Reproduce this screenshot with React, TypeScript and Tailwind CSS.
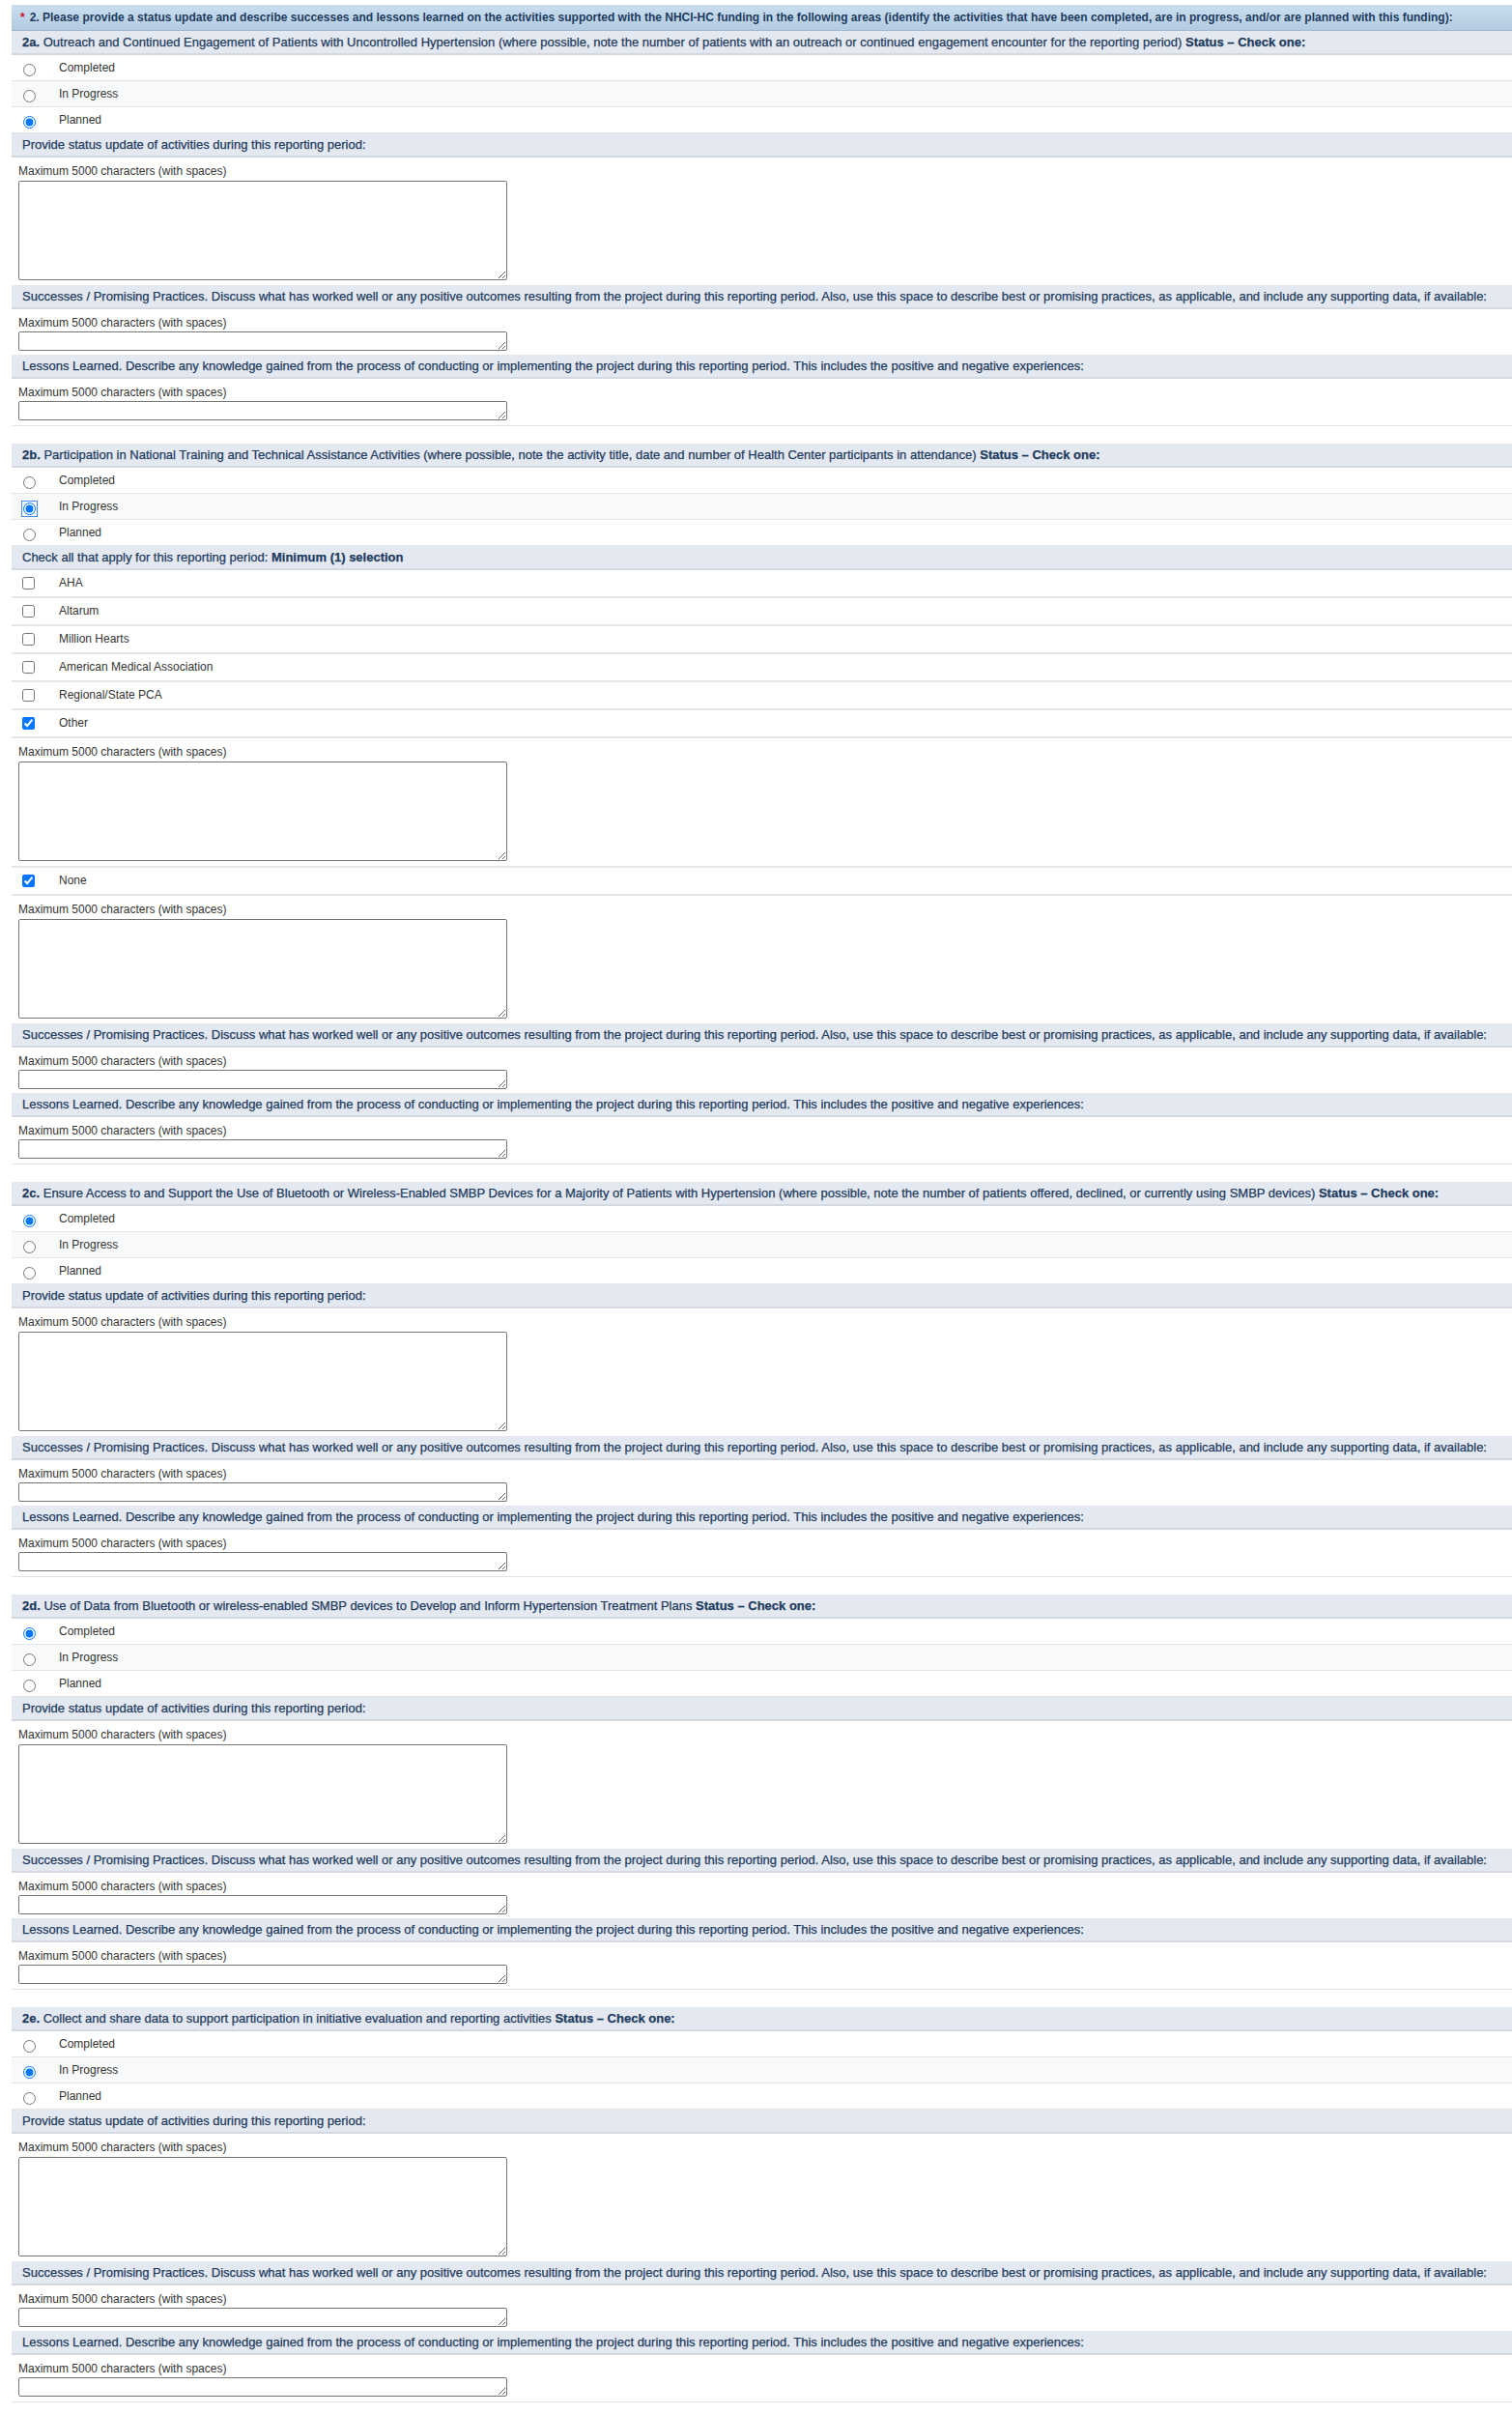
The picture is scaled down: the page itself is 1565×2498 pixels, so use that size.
import React from "react";

const SUCCESS =
  "Successes / Promising Practices. Discuss what has worked well or any positive outcomes resulting from the project during this reporting period. Also, use this space to describe best or promising practices, as applicable, and include any supporting data, if available:";
const LESSONS =
  "Lessons Learned. Describe any knowledge gained from the process of conducting or implementing the project during this reporting period. This includes the positive and negative experiences:";

function Band({ children }: { children: React.ReactNode }) {
  return (
    <div className="bg-[#e4e8f0] border-b-2 border-[#d3d8e1] pl-[11px] pr-2 py-[4px] text-[13px] leading-[15px] text-[#1d3b5e] whitespace-nowrap [-webkit-text-stroke:0.25px]">
      {children}
    </div>
  );
}

function RadioRow({
  name,
  label,
  checked,
  alt,
  focus,
}: {
  name: string;
  label: string;
  checked: boolean;
  alt: boolean;
  focus?: boolean;
}) {
  return (
    <div
      className={
        "flex items-center h-[27px] border-b border-[#e3e4e6] pl-[12px] text-[12px] leading-[14px] text-[#333333] " +
        (alt ? "bg-[#f8f9fa]" : "bg-white")
      }
    >
      <input
        type="radio"
        name={name}
        defaultChecked={checked}
        className={
          "m-0 relative top-[2px] w-[13px] h-[13px] shrink-0 " +
          (focus ? "outline outline-1 outline-[#4a8ff0] outline-offset-1" : "")
        }
      />
      <span className="ml-[24px]">{label}</span>
    </div>
  );
}

function CheckRow({ label, checked }: { label: string; checked?: boolean }) {
  return (
    <div className="flex items-center h-[29px] border-b-2 border-[#e5e6e8] bg-white pl-[11px] text-[12px] leading-[15px] text-[#333333]">
      <input
        type="checkbox"
        defaultChecked={checked}
        className="m-0 w-[13px] h-[13px] shrink-0"
      />
      <span className="ml-[25px]">{label}</span>
    </div>
  );
}

function Big({ border }: { border?: boolean }) {
  return (
    <div
      className={
        "bg-white pl-[7px] pt-[7px] pb-[5px] " +
        (border ? "border-b-2 border-[#e5e6e8]" : "")
      }
    >
      <div className="text-[12px] leading-[14px] text-[#333333] mb-[3px]">
        Maximum 5000 characters (with spaces)
      </div>
      <textarea
        readOnly
        className="block w-[506px] h-[103px] border border-[#767676] rounded-[2px] bg-white"
      />
    </div>
  );
}

function Small({ last }: { last?: boolean }) {
  return (
    <div
      className={
        "bg-white pl-[7px] pt-[7px] " +
        (last ? "pb-[5px] border-b border-[#e3e4e6]" : "pb-[4px]")
      }
    >
      <div className="text-[12px] leading-[14px] text-[#333333] mb-[2px]">
        Maximum 5000 characters (with spaces)
      </div>
      <textarea
        readOnly
        className="block w-[506px] h-[20px] border border-[#767676] rounded-[2px] bg-white"
      />
    </div>
  );
}

function StatusRadios({
  name,
  selected,
  focusSel,
}: {
  name: string;
  selected: string;
  focusSel?: boolean;
}) {
  const opts = ["Completed", "In Progress", "Planned"];
  return (
    <>
      {opts.map((o, i) => (
        <RadioRow
          key={o}
          name={name}
          label={o}
          checked={o === selected}
          alt={i === 1}
          focus={focusSel && o === selected}
        />
      ))}
    </>
  );
}

function Tail() {
  return (
    <>
      <Band>{SUCCESS}</Band>
      <Small />
      <Band>{LESSONS}</Band>
      <Small last />
    </>
  );
}

function Section({
  id,
  title,
  selected,
  first,
}: {
  id: string;
  title: string;
  selected: string;
  first?: boolean;
}) {
  return (
    <div className={first ? "" : "mt-[18px]"}>
      <Band>
        <b>{id}.</b> {title} <b>Status – Check one:</b>
      </Band>
      <StatusRadios name={id} selected={selected} />
      <Band>Provide status update of activities during this reporting period:</Band>
      <Big />
      <Tail />
    </div>
  );
}

export default function App() {
  return (
    <div className="bg-white min-h-[2498px] pt-[5px] pl-[12px] font-['Liberation_Sans',Arial,sans-serif] overflow-hidden">
      <div className="bg-linear-to-b from-[#cadef0] to-[#b3cbe0] border-b border-[#9fb8ce] pl-[9px] py-[6px] text-[12px] leading-[14px] font-bold text-[#1d3b5e] whitespace-nowrap">
        <span className="text-[#c8102e] mr-[5px]">*</span>
        2. Please provide a status update and describe successes and lessons learned on the activities supported with the NHCI-HC funding in the following areas (identify the activities that have been completed, are in progress, and/or are planned with this funding):
      </div>

      <Section
        first
        id="2a"
        title="Outreach and Continued Engagement of Patients with Uncontrolled Hypertension (where possible, note the number of patients with an outreach or continued engagement encounter for the reporting period)"
        selected="Planned"
      />

      <div className="mt-[18px]">
        <Band>
          <b>2b.</b> Participation in National Training and Technical Assistance Activities (where possible, note the activity title, date and number of Health Center participants in attendance) <b>Status – Check one:</b>
        </Band>
        <StatusRadios name="2b" selected="In Progress" focusSel />
        <Band>
          Check all that apply for this reporting period: <b>Minimum (1) selection</b>
        </Band>
        <CheckRow label="AHA" />
        <CheckRow label="Altarum" />
        <CheckRow label="Million Hearts" />
        <CheckRow label="American Medical Association" />
        <CheckRow label="Regional/State PCA" />
        <CheckRow label="Other" checked />
        <Big border />
        <CheckRow label="None" checked />
        <Big />
        <Tail />
      </div>

      <Section
        id="2c"
        title="Ensure Access to and Support the Use of Bluetooth or Wireless-Enabled SMBP Devices for a Majority of Patients with Hypertension (where possible, note the number of patients offered, declined, or currently using SMBP devices)"
        selected="Completed"
      />
      <Section
        id="2d"
        title="Use of Data from Bluetooth or wireless-enabled SMBP devices to Develop and Inform Hypertension Treatment Plans"
        selected="Completed"
      />
      <Section
        id="2e"
        title="Collect and share data to support participation in initiative evaluation and reporting activities"
        selected="In Progress"
      />
    </div>
  );
}
